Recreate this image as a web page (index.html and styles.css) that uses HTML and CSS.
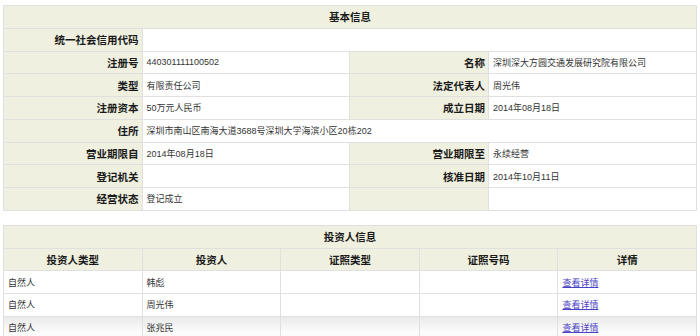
FILE: index.html
```html
<!DOCTYPE html>
<html lang="zh-CN">
<head>
<meta charset="utf-8">
<title>基本信息</title>
<link rel="stylesheet" href="styles.css">
</head>
<body>
<div class="page">
  <table class="info">
    <colgroup><col class="w20"><col class="w30"><col class="w20"><col class="w30"></colgroup>
    <tr><th class="title" colspan="4">基本信息</th></tr>
    <tr><th class="lbl">统一社会信用代码</th><td colspan="3"></td></tr>
    <tr><th class="lbl">注册号</th><td>440301111100502</td><th class="lbl">名称</th><td>深圳深大方圆交通发展研究院有限公司</td></tr>
    <tr><th class="lbl">类型</th><td>有限责任公司</td><th class="lbl">法定代表人</th><td>周光伟</td></tr>
    <tr><th class="lbl">注册资本</th><td>50万元人民币</td><th class="lbl">成立日期</th><td>2014年08月18日</td></tr>
    <tr><th class="lbl">住所</th><td colspan="3">深圳市南山区南海大道3688号深圳大学海滨小区20栋202</td></tr>
    <tr><th class="lbl">营业期限自</th><td>2014年08月18日</td><th class="lbl">营业期限至</th><td>永续经营</td></tr>
    <tr><th class="lbl">登记机关</th><td></td><th class="lbl">核准日期</th><td>2014年10月11日</td></tr>
    <tr><th class="lbl">经营状态</th><td>登记成立</td><th class="lbl"></th><td></td></tr>
  </table>

  <table class="info investors">
    <colgroup><col class="w5"><col class="w5"><col class="w5"><col class="w5"><col class="w5"></colgroup>
    <tr><th class="title" colspan="5">投资人信息</th></tr>
    <tr><th class="col">投资人类型</th><th class="col">投资人</th><th class="col">证照类型</th><th class="col">证照号码</th><th class="col">详情</th></tr>
    <tr><td>自然人</td><td>韩彪</td><td></td><td></td><td><a href="#">查看详情</a></td></tr>
    <tr><td>自然人</td><td>周光伟</td><td></td><td></td><td><a href="#">查看详情</a></td></tr>
    <tr class="shade"><td>自然人</td><td>张兆民</td><td></td><td></td><td><a href="#">查看详情</a></td></tr>
  </table>
</div>
</body>
</html>
```

FILE: styles.css
```css
html, body {
  margin: 0;
  padding: 0;
  background: #fff;
}
.page {
  padding: 5px 3px 0 3px;
  font-family: "Liberation Sans", "Noto Sans CJK SC", sans-serif;
}
.info {
  width: 100%;
  border-collapse: collapse;
  table-layout: fixed;
  border: 1px solid #dcdcdc;
}
.investors {
  margin-top: 14px;
}
.w20 { width: 20%; }
.w30 { width: 30%; }
.w5 { width: 20%; }
.info th, .info td {
  border: 1px solid #e0e0e0;
  height: 21.75px;
  padding: 0;
  vertical-align: middle;
  white-space: nowrap;
  overflow: hidden;
}
.info td {
  background: #fff;
  color: #333;
  font-size: 9px;
  padding-left: 4px;
  text-align: left;
}
.info th {
  background: #eff0df;
  color: #1a1a1a;
  font-family: "Noto Sans CJK SC", sans-serif;
  font-weight: 700;
  font-size: 10.5px;
}
.info th.title {
  text-align: center;
}
.info th.lbl {
  text-align: right;
  padding-right: 3px;
}
.info th.col {
  text-align: center;
}
.info a {
  color: #4a42c4;
  text-decoration: underline;
}
.shade td {
  background: linear-gradient(#e9e9e9, #fbfbfb 70%);
}
```
